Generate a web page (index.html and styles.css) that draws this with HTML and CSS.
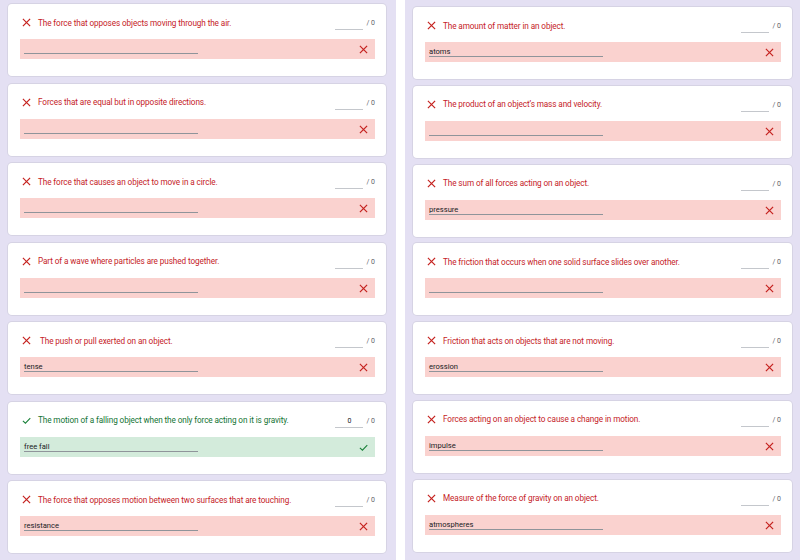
FILE: index.html
```html
<!DOCTYPE html>
<html>
<head>
<meta charset="utf-8">
<link rel="stylesheet" href="styles.css">
</head>
<body>
<svg width="0" height="0" class="defs">
  <defs>
    <symbol id="ix" viewBox="0 0 10 10"><path d="M1.5 1.5 L8.5 8.5 M8.5 1.5 L1.5 8.5" stroke="currentColor" stroke-width="1.35" fill="none" stroke-linecap="square"/></symbol>
    <symbol id="ic" viewBox="0 0 10 10"><path d="M1 5.3 L3.8 8 L9.2 2.4" stroke="currentColor" stroke-width="1.2" fill="none"/></symbol>
  </defs>
</svg>
<div class="page">
  <div class="panel panel-left">
    <div class="card wrong"><div class="head"><svg class="icon"><use href="#ix"/></svg><span class="q">The force that opposes objects moving through the air.</span><span class="score"><span class="box"></span><span class="max">/ 0</span></span></div><div class="ans"><span class="field"></span><svg class="aicon"><use href="#ix"/></svg></div></div>
    <div class="card wrong"><div class="head"><svg class="icon"><use href="#ix"/></svg><span class="q">Forces that are equal but in opposite directions.</span><span class="score"><span class="box"></span><span class="max">/ 0</span></span></div><div class="ans"><span class="field"></span><svg class="aicon"><use href="#ix"/></svg></div></div>
    <div class="card wrong"><div class="head"><svg class="icon"><use href="#ix"/></svg><span class="q">The force that causes an object to move in a circle.</span><span class="score"><span class="box"></span><span class="max">/ 0</span></span></div><div class="ans"><span class="field"></span><svg class="aicon"><use href="#ix"/></svg></div></div>
    <div class="card wrong"><div class="head"><svg class="icon"><use href="#ix"/></svg><span class="q">Part of a wave where particles are pushed together.</span><span class="score"><span class="box"></span><span class="max">/ 0</span></span></div><div class="ans"><span class="field"></span><svg class="aicon"><use href="#ix"/></svg></div></div>
    <div class="card wrong"><div class="head"><svg class="icon"><use href="#ix"/></svg><span class="q">&nbsp;The push or pull exerted on an object.</span><span class="score"><span class="box"></span><span class="max">/ 0</span></span></div><div class="ans"><span class="field">tense</span><svg class="aicon"><use href="#ix"/></svg></div></div>
    <div class="card right"><div class="head"><svg class="icon"><use href="#ic"/></svg><span class="q">The motion of a falling object when the only force acting on it is gravity.</span><span class="score"><span class="box">0</span><span class="max">/ 0</span></span></div><div class="ans"><span class="field">free fall</span><svg class="aicon"><use href="#ic"/></svg></div></div>
    <div class="card wrong"><div class="head"><svg class="icon"><use href="#ix"/></svg><span class="q">The force that opposes motion between two surfaces that are touching.</span><span class="score"><span class="box"></span><span class="max">/ 0</span></span></div><div class="ans"><span class="field">resistance</span><svg class="aicon"><use href="#ix"/></svg></div></div>
  </div>
  <div class="panel panel-right">
    <div class="card wrong"><div class="head"><svg class="icon"><use href="#ix"/></svg><span class="q">The amount of matter in an object.</span><span class="score"><span class="box"></span><span class="max">/ 0</span></span></div><div class="ans"><span class="field">atoms</span><svg class="aicon"><use href="#ix"/></svg></div></div>
    <div class="card wrong"><div class="head"><svg class="icon"><use href="#ix"/></svg><span class="q">The product of an object’s mass and velocity.</span><span class="score"><span class="box"></span><span class="max">/ 0</span></span></div><div class="ans"><span class="field"></span><svg class="aicon"><use href="#ix"/></svg></div></div>
    <div class="card wrong"><div class="head"><svg class="icon"><use href="#ix"/></svg><span class="q">The sum of all forces acting on an object.</span><span class="score"><span class="box"></span><span class="max">/ 0</span></span></div><div class="ans"><span class="field">pressure</span><svg class="aicon"><use href="#ix"/></svg></div></div>
    <div class="card wrong"><div class="head"><svg class="icon"><use href="#ix"/></svg><span class="q">The friction that occurs when one solid surface slides over another.</span><span class="score"><span class="box"></span><span class="max">/ 0</span></span></div><div class="ans"><span class="field"></span><svg class="aicon"><use href="#ix"/></svg></div></div>
    <div class="card wrong"><div class="head"><svg class="icon"><use href="#ix"/></svg><span class="q">Friction that acts on objects that are not moving.</span><span class="score"><span class="box"></span><span class="max">/ 0</span></span></div><div class="ans"><span class="field">erossion</span><svg class="aicon"><use href="#ix"/></svg></div></div>
    <div class="card wrong"><div class="head"><svg class="icon"><use href="#ix"/></svg><span class="q">Forces acting on an object to cause a change in motion.</span><span class="score"><span class="box"></span><span class="max">/ 0</span></span></div><div class="ans"><span class="field">impulse</span><svg class="aicon"><use href="#ix"/></svg></div></div>
    <div class="card wrong"><div class="head"><svg class="icon"><use href="#ix"/></svg><span class="q">Measure of the force of gravity on an object.</span><span class="score"><span class="box"></span><span class="max">/ 0</span></span></div><div class="ans"><span class="field">atmospheres</span><svg class="aicon"><use href="#ix"/></svg></div></div>
  </div>
</div>
</body>
</html>
```
FILE: styles.css
```css
html, body {
  margin: 0;
  padding: 0;
  background: #ffffff;
  font-family: Roboto, "Liberation Sans", Arial, sans-serif;
}
.defs {
  position: absolute;
  width: 0;
  height: 0;
}
.page {
  display: flex;
  gap: 9px;
  width: 800px;
  height: 560px;
  overflow: hidden;
}
.panel {
  background: #e4e0f3;
  display: flex;
  flex-direction: column;
  box-sizing: border-box;
  height: 560px;
}
.panel-left {
  width: 396px;
  padding: 4px 10px 0 8px;
  gap: 7.5px;
}
.panel-right {
  width: 395px;
  padding: 7px 8px 0 8px;
  gap: 6.8px;
}
.card {
  background: #ffffff;
  border-radius: 4px;
  box-shadow: 0 0 0 1px #d6d3e4;
  height: 72px;
  box-sizing: border-box;
  padding: 12px 11px 0 12px;
  display: flex;
  flex-direction: column;
  gap: 10px;
  flex: none;
}
.head {
  display: flex;
  align-items: center;
  height: 13px;
  padding-left: 2px;
}
.icon {
  width: 9px;
  height: 9px;
  flex: none;
  margin-right: 7px;
}
.q {
  font-size: 8.2px;
  letter-spacing: -0.1px;
  flex: 1;
  white-space: nowrap;
}
.wrong .icon, .wrong .q, .wrong .aicon { color: #c5221f; }
.right .icon, .right .aicon { color: #188038; }
.right .q { color: #137333; }
.score {
  display: flex;
  align-items: flex-start;
  gap: 3px;
  font-size: 7px;
  color: #5f6368;
  height: 13px;
  margin-top: 4px;
}
.box {
  width: 28px;
  height: 12px;
  border-bottom: 1px solid #c4c7cc;
  text-align: center;
  color: #202124;
  line-height: 10px;
  box-sizing: border-box;
}
.max {
  line-height: 10px;
}
.ans {
  height: 20px;
  display: flex;
  align-items: flex-start;
  justify-content: space-between;
  padding: 0 7px 0 4px;
  box-sizing: border-box;
}
.wrong .ans { background: #fad2cf; }
.right .ans { background: #d3ebdb; }
.field {
  width: 174px;
  height: 11px;
  margin-top: 4px;
  padding-top: 1px;
  border-bottom: 1px solid #8f949a;
  font-size: 7.6px;
  color: #202124;
  line-height: 9px;
  box-sizing: border-box;
}
.aicon {
  width: 9px;
  height: 9px;
  margin-top: 6px;
}
```
